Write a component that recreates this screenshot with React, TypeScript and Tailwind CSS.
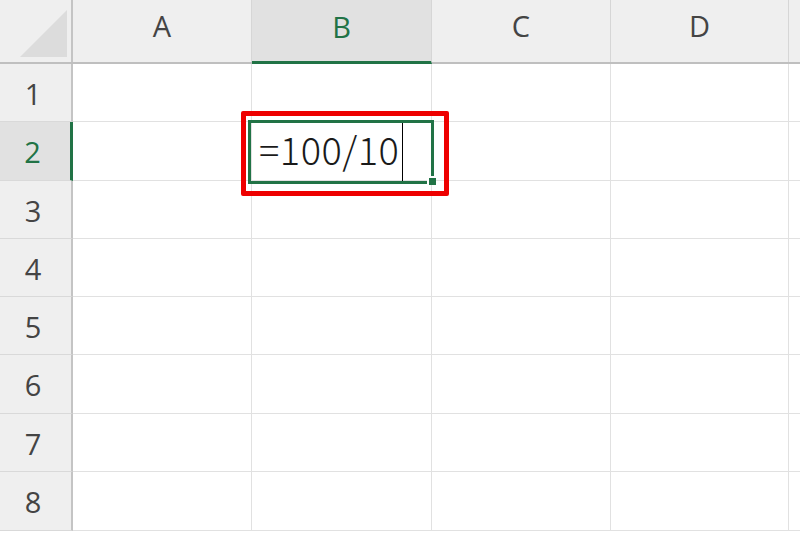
import React from "react";

const cols = [
  { l: "A", w: "w-[179px]" },
  { l: "B", w: "w-[180px]" },
  { l: "C", w: "w-[179px]" },
  { l: "D", w: "w-[178px]" },
];
const rowH = ["h-[58px]", "h-[59px]", "h-[58px]", "h-[58px]", "h-[58px]", "h-[59px]", "h-[58px]", "h-[59px]"];

export default function App() {
  return (
    <div
      className="relative w-[800px] h-[533px] overflow-hidden bg-white"
      style={{ fontFamily: '"Open Sans", "Noto Sans", sans-serif' }}
    >
      {/* header */}
      <div className="flex h-[64px] bg-[#efefef] border-b-2 border-[#bfbfbf]">
        <div className="w-[73px] shrink-0 border-r-2 border-[#c4c4c4] flex items-end justify-end pb-[4px] pr-[3px]">
          <svg width="48" height="48" viewBox="0 0 48 48">
            <polygon points="0,47 47,0 47,47" fill="#dcdcdc" />
          </svg>
        </div>
        {cols.map((c) => (
          <div
            key={c.l}
            className={`${c.w} shrink-0 border-r border-[#d6d6d6] flex items-center justify-center text-[29px] ${
              c.l === "B" ? "bg-[#e1e1e1] text-[#217346] border-b-[3px] border-b-[#217346] -mb-[2px]" : "text-[#444444]"
            }`}
          >
            <span className={c.l === "B" ? "-mt-[7px]" : "-mt-[10px]"}>{c.l}</span>
          </div>
        ))}
        <div className="flex-1" />
      </div>
      {/* rows */}
      {rowH.map((h, i) => (
        <div key={i} className={`flex ${h}`}>
          <div
            className={`w-[73px] shrink-0 border-b border-[#d9d9d9] flex items-center justify-center text-[29px] ${
              i === 1
                ? "bg-[#e1e1e1] text-[#217346] border-r-[3px] border-r-[#217346]"
                : "bg-[#efefef] text-[#444444] border-r-2 border-r-[#c4c4c4]"
            }`}
          >
            <span className="mt-[2px] pr-[5px]">{i + 1}</span>
          </div>
          {cols.map((c) => (
            <div key={c.l} className={`${c.w} shrink-0 border-r border-b border-[#e1e1e1]`} />
          ))}
          <div className="flex-1 border-b border-[#e1e1e1]" />
        </div>
      ))}

      {/* red highlight */}
      <div className="absolute left-[241px] top-[111px] w-[208px] h-[85px] border-[5px] border-[#ee0000] rounded-[2px]" />
      {/* active cell */}
      <div className="absolute left-[248px] top-[120px] w-[186px] h-[64px] border-[3px] border-[#217346] flex items-center pl-[8px]">
        <span
          className="text-[38px] font-light text-[#1a1a1a] leading-none tracking-[0.5px] -mt-[6px]"
          style={{ fontFamily: '"Noto Sans CJK JP", sans-serif' }}
        >
          =100/10
        </span>
        <div className="w-[1px] h-[58px] bg-black ml-[3px]" />
      </div>
      {/* fill handle */}
      <div className="absolute left-[427px] top-[176px] w-[9px] h-[9px] bg-[#217346] border-l-2 border-t-2 border-white" />
    </div>
  );
}
